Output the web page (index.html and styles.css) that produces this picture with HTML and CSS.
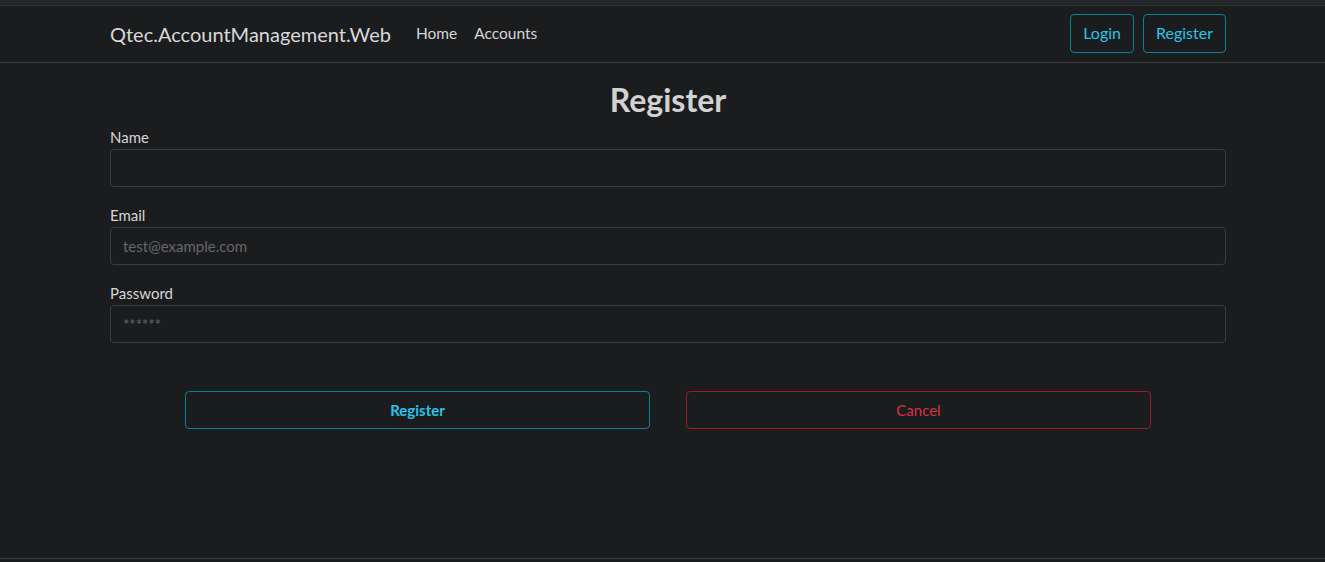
FILE: index.html
```html
<!DOCTYPE html>
<html lang="en">
<head>
<meta charset="utf-8">
<title>Register - Qtec.AccountManagement.Web</title>
<link rel="stylesheet" href="styles.css">
</head>
<body>
<div class="topstrip"></div>
<header class="navbar">
  <div class="container nav-inner">
    <a class="brand" href="#">Qtec.AccountManagement.Web</a>
    <nav class="nav-links">
      <a class="nav-link" href="#">Home</a>
      <a class="nav-link" href="#">Accounts</a>
    </nav>
    <div class="nav-actions">
      <a class="btn btn-info" href="#">Login</a>
      <a class="btn btn-info" href="#">Register</a>
    </div>
  </div>
</header>
<main class="container main">
  <h2 class="title">Register</h2>
  <form class="form">
    <div class="group">
      <label class="label" for="name">Name</label>
      <input class="input" id="name" type="text">
    </div>
    <div class="group">
      <label class="label" for="email">Email</label>
      <input class="input" id="email" type="email" placeholder="test@example.com">
    </div>
    <div class="group">
      <label class="label" for="pw">Password</label>
      <input class="input" id="pw" type="password" placeholder="******">
    </div>
    <div class="actions">
      <button class="btn wide btn-info bold" type="button">Register</button>
      <button class="btn wide btn-danger" type="button">Cancel</button>
    </div>
  </form>
</main>
<footer class="footer"></footer>
</body>
</html>
```

FILE: styles.css
```css
* { box-sizing: border-box; }
html, body { margin: 0; padding: 0; }
body {
  background: #1b1c1e;
  color: #d6d6d6;
  font-family: "Lato", "Noto Sans", sans-serif;
  font-size: 16px;
  line-height: 1.5;
  height: 562px;
  overflow: hidden;
  display: flex;
  flex-direction: column;
  padding-left: 11px;
}
.topstrip {
  height: 6px;
  margin-left: -11px;
  background: #26272b;
  border-bottom: 1px solid #323337;
}
.container {
  width: 100%;
  max-width: 1116px;
  margin: 0 auto;
}
.navbar {
  margin-left: -11px;
  padding-left: 11px;
  border-bottom: 1px solid #3a3b3f;
  height: 57px;
  display: flex;
}
.nav-inner {
  display: flex;
  align-items: center;
}
.brand {
  color: #d9d9d9;
  font-size: 20px;
  text-decoration: none;
  margin-right: 17px;
}
.nav-links { display: flex; flex: 1; }
.nav-link {
  color: #d6d6d6;
  text-decoration: none;
  font-size: 15.5px;
  padding: 0 8px;
}
.nav-link + .nav-link { padding-left: 9px; }
.nav-actions { display: flex; gap: 9px; margin-bottom: 2px; }
.btn {
  display: inline-flex;
  align-items: center;
  justify-content: center;
  height: 39px;
  padding: 0 12px;
  border-radius: 4px;
  border: 1px solid;
  background: transparent;
  font-family: inherit;
  font-size: 16px;
  text-decoration: none;
}
.btn-info { color: #27c4ea; border-color: #0b7f97; }
.btn-danger { color: #d9323f; border-color: #a51a26; }
.bold { font-weight: 700; }
.main {
  flex: 1;
  padding-top: 18px;
}
.title {
  margin: 0 0 6px;
  text-align: center;
  font-size: 32px;
  font-weight: 700;
  line-height: 38px;
  color: #d2d2d2;
}
.group { margin-bottom: 16px; }
.label {
  display: block;
  color: #d6d6d6;
  font-size: 15px;
  line-height: 24px;
}
.input {
  display: block;
  width: 100%;
  height: 38px;
  background: #1b1c1e;
  border: 1px solid #3d3e42;
  border-radius: 4px;
  padding: 0 12px;
  color: #d6d6d6;
  font-family: inherit;
  font-size: 15px;
}
.input::placeholder { color: #666769; }
.actions {
  display: flex;
  justify-content: center;
  gap: 36px;
  margin-top: 48px;
}
.wide { width: 465px; height: 38px; font-size: 15px; }
.footer {
  margin-left: -11px;
  height: 4px;
  border-top: 1px solid #3a3b3f;
}
```
